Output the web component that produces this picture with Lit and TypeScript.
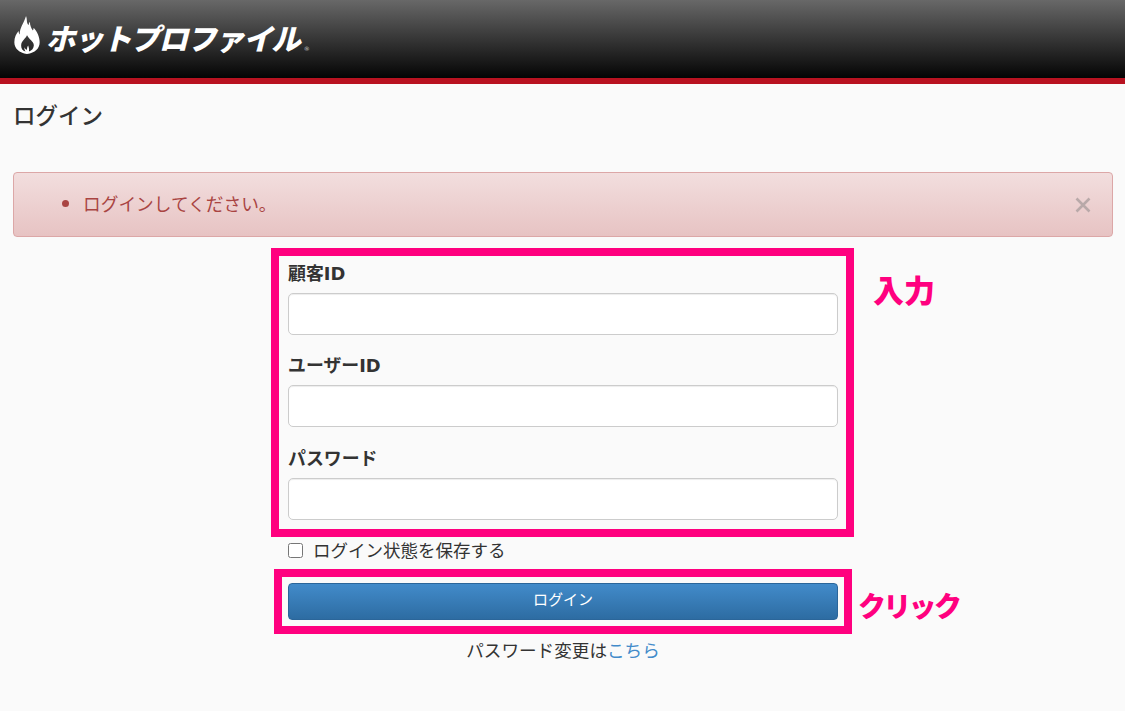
import { LitElement, html, css } from "lit";
import { customElement } from "lit/decorators.js";

@customElement("app-root")
export class AppRoot extends LitElement {
  static styles = css`
    :host { display: block; position: relative; height: 711px; overflow: hidden; background: #fafafa; color: #333;
      font-family: "DejaVu Sans", "Noto Sans CJK JP", sans-serif; }
    * { box-sizing: border-box; }
    header { height: 84px; border-bottom: 6px solid #b81220; background: linear-gradient(#686868, #040404);
      display: flex; align-items: flex-start; padding: 16px 0 0 14px; }
    .flame { width: 26px; height: 38px; flex: none; }
    .logo { font-family: "Noto Sans CJK JP", sans-serif; font-weight: 900; font-size: 29.500px; line-height: 46px; color: #fff;
      margin-left: 9px; margin-top: -2px; letter-spacing: -1.300px; transform: skewX(-14deg); white-space: nowrap; }
    .reg { font-size: 6px; color: #ccc; font-family: "DejaVu Sans", sans-serif; font-weight: 400; margin-top: 29px; margin-left: 1px; }
    main { padding: 0 12px 0 13px; }
    h1 { margin: 15px 0 0; font: 500 22.500px/30px "Noto Sans CJK JP", sans-serif; color: #333; height: 73px; }
    .alert { height: 65px; border: 1px solid #dca7a7; border-radius: 4px; background: linear-gradient(#f2dede, #e7c3c3);
      color: #a94442; display: flex; align-items: center; padding: 0 20px 0 50px; font: 400 17.700px/24px "Noto Sans CJK JP", sans-serif; }
    .alert ul { margin: -4px 0 0; padding: 0 0 0 19px; flex: 1; }
    .close { width: 18px; height: 18px; flex: none; margin-top: 1px; margin-left: -1px; }
    form { width: 550px; padding-top: 22px; display: flex; flex-direction: column; margin-left: 275px; }
    .field { height: 92.400px; }
    label.t { display: block; font-size: 17.900px; font-weight: 700; line-height: 22px; height: 30px; margin-top: 4px; color: #333; }
    input.text { display: block; width: 100%; height: 42px; background: #fff; border: 1px solid #ccc; border-radius: 5px;
      box-shadow: inset 0 1px 1px rgba(0,0,0,.075); }
    .check { display: flex; align-items: center; height: 24px; margin-top: 2px; font: 400 17.500px/24px "Noto Sans CJK JP", sans-serif; color: #333; }
    .check input { width: 15px; height: 15px; margin: 0 10px 0 0; accent-color: #fff; }
    button { display: block; width: 100%; height: 37px; margin-top: 21px; border: 1px solid #2b669a; border-radius: 4px;
      background: linear-gradient(#428bca, #2d6ca2); color: #fff; font: 400 15px/20px "Noto Sans CJK JP", sans-serif; padding: 0 0 6px; }
    .change { text-align: center; margin-top: 17px; font: 400 17.600px/26px "Noto Sans CJK JP", sans-serif; color: #333; }
    .change a { color: #428bca; text-decoration: none; }
    .box { position: absolute; border: 8px solid #ff007f; pointer-events: none; }
    .b1 { left: 271px; top: 248px; width: 583px; height: 289px; }
    .b2 { left: 274px; top: 569px; width: 578px; height: 65px; }
    .note { position: absolute; color: #ff007f; font: 900 31px/40px "Noto Sans CJK JP", sans-serif; white-space: nowrap; }
    .n1 { left: 873px; top: 269px; }
    .n2 { left: 858px; top: 585px; letter-spacing: -2.700px; font-size: 28px; }
  `;

  field(name: string) {
    return html`<div class="field"><label class="t">${name}</label><input class="text" type="text" /></div>`;
  }

  render() {
    return html`
      <header>
        <svg class="flame" viewBox="0 0 26 39">
          <path fill="#fff" fill-rule="evenodd" d="M12 0c1.500 4 0 6 2.500 9.500C15 7.500 15.500 6.800 16 6c0 3.500 1 6 3 9 .6-1 .8-2 .8-3 3.500 4 6.200 9 6.200 15 0 6.500-4.800 11-13 12C5 38 0 33.500 0 27c0-5 2-8.500 4.300-11.500.2 1.500.4 2.500 1.200 3.500C5.500 12 9.500 8 12 0Zm.8 20c-.6 3-5.800 5-5.800 10.500 0 3 1.500 5 4.500 6-1-1.500-1.400-3-1-4.500.4 1.500 1.200 2.300 2.500 2.600 0-1.800.4-3.200 1.200-4.200.4 2 1.400 3 .8 6 3-1 5-3.500 5-6.500 0-4-5.200-6-6.700-9.900Z"/>
        </svg>
        <span class="logo">ホットプロファイル</span><span class="reg">®</span>
      </header>
      <main>
        <h1>ログイン</h1>
        <div class="alert">
          <ul><li>ログインしてください。</li></ul>
          <svg class="close" viewBox="0 0 18 18"><path d="M2.500 2.500l13 13M15.500 2.500l-13 13" stroke="#b9a9a9" stroke-width="2.600" fill="none"/></svg>
        </div>
        <form>
          ${this.field("顧客ID")}
          ${this.field("ユーザーID")}
          ${this.field("パスワード")}
          <label class="check"><input type="checkbox" />ログイン状態を保存する</label>
          <button type="button">ログイン</button>
          <div class="change">パスワード変更は<a href="#">こちら</a></div>
        </form>
      </main>
      <div class="box b1"></div>
      <div class="box b2"></div>
      <div class="note n1">入力</div>
      <div class="note n2">クリック</div>
    `;
  }
}
